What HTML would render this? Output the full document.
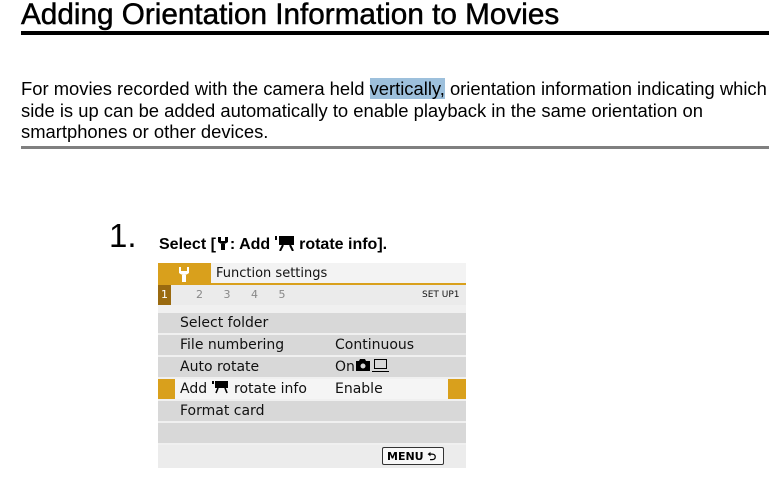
<!DOCTYPE html>
<html><head><style>
body{margin:0;width:769px;height:496px;background:#fff;position:relative;overflow:hidden;font-family:"Liberation Sans",Arial,sans-serif;}
.a{position:absolute;white-space:nowrap;}
.scr{position:absolute;left:158px;top:263px;width:308px;height:205px;background:#ececec;font-family:"DejaVu Sans","Liberation Sans",sans-serif;}
.row{position:absolute;left:0;width:308px;height:20px;background:#d8d8d8;font-size:14px;color:#111;line-height:21px;}
.row .l{position:absolute;left:22px;}
.row .r{position:absolute;left:177px;}
</style></head><body>
<div class="a" style="left:21px;top:-2px;font-size:30px;line-height:34px;color:#000;-webkit-text-stroke:0.5px #000;transform:scaleX(0.99);transform-origin:left;">Adding Orientation Information to Movies</div>
<div class="a" style="left:21px;top:31px;width:748px;height:4px;background:#000;"></div>
<div class="a" style="left:21px;top:78px;font-size:18.4px;line-height:21.5px;color:#000;">For movies recorded with the camera held <span style="background:#9dc0dc">vertically,</span> orientation information indicating which<br>side is up can be added automatically to enable playback in the same orientation on<br>smartphones or other devices.</div>
<div class="a" style="left:21px;top:146px;width:748px;height:3px;background:#808080;"></div>
<div class="a" style="left:109px;top:218px;font-size:33px;line-height:36px;">1.</div>
<div class="a" style="left:159px;top:235px;font-size:16px;font-weight:bold;line-height:20px;">Select [<svg width="14" height="14" viewBox="0 0 14 14" style="vertical-align:-1px"><path d="M2 1 L2 6 Q7 10 12 6 L12 1 L9 1 L9 5 L5 5 L5 1 Z M5 8 L9 8 L9 14 L5 14 Z" fill="#000"/></svg>: Add <svg width="20" height="16" viewBox="0 0 20 16" style="vertical-align:-2px"><rect x="0" y="1" width="2" height="4" fill="#000"/><rect x="4" y="1" width="15" height="9" fill="#000"/><path d="M8 10 L5 16 M15 10 L18 16" stroke="#000" stroke-width="2"/></svg> rotate info].</div>
<div class="scr">
 <div class="a" style="left:0;top:0;width:308px;height:20px;background:#f3f3f3;border-bottom:2px solid #d9a01c;"></div>
 <div class="a" style="left:0;top:0;width:53px;height:22px;background:#d9a01c;"><svg width="53" height="22" viewBox="0 0 53 22"><path d="M21 4 L21 10 Q26 14 31 10 L31 4 L29 4 L29 8 L23 8 L23 4 Z M24 12 L28 12 L28 19 L24 19 Z" fill="#fff"/></svg></div>
 <div class="a" style="left:58px;top:0;font-size:13px;line-height:21px;color:#111;">Function settings</div>
 <div class="a" style="left:0;top:22px;width:308px;height:20px;background:#ebebeb;"></div>
 <div class="a" style="left:0;top:22px;width:13px;height:20px;background:#9a6a10;color:#fff;font-size:11px;line-height:20px;text-align:center;">1</div>
 <div class="a" style="left:38px;top:22px;font-size:11px;line-height:20px;color:#888;word-spacing:17px;">2 3 4 5</div>
 <div class="a" style="left:264px;top:22px;font-size:9px;line-height:20px;color:#111;">SET UP1</div>
 <div class="a" style="left:0;top:42px;width:308px;height:140px;background:#f0f0f0;"></div>
 <div class="row" style="top:50px"><span class="l">Select folder</span></div>
 <div class="row" style="top:72px"><span class="l">File numbering</span><span class="r">Continuous</span></div>
 <div class="row" style="top:94px"><span class="l">Auto rotate</span><span class="r">On<svg width="34" height="16" viewBox="0 0 34 16" style="vertical-align:-2px"><path d="M1 4 L4 4 L5 2 L10 2 L11 4 L15 4 L15 14 L1 14 Z" fill="#000"/><circle cx="8" cy="9" r="2.5" fill="#d8d8d8"/><rect x="19.5" y="2.5" width="12" height="9" fill="none" stroke="#000"/><path d="M17 14.5 L34 14.5" stroke="#000"/></svg></span></div>
 <div class="row" style="top:116px;background:#d9a01c"><div class="a" style="left:17px;top:0;width:273px;height:20px;background:#f5f5f5;"></div><span class="l">Add <svg width="18" height="14" viewBox="0 0 18 14" style="vertical-align:-1px"><rect x="0" y="1" width="2" height="3" fill="#000"/><rect x="3" y="1" width="13" height="7" fill="#000"/><path d="M6 8 L4 13 M13 8 L15 13" stroke="#000" stroke-width="1.6"/></svg> rotate info</span><span class="r">Enable</span></div>
 <div class="row" style="top:138px"><span class="l">Format card</span></div>
 <div class="row" style="top:160px"></div>
 <div class="a" style="left:0;top:182px;width:308px;height:23px;background:#ececec;"></div>
 <div class="a" style="left:224px;top:184px;width:62px;height:18px;border:1px solid #333;border-radius:2px;background:#f8f8f8;font-size:11px;font-weight:bold;line-height:18px;padding-left:4px;box-sizing:border-box;">MENU ⮌</div>
</div>
</body></html>
